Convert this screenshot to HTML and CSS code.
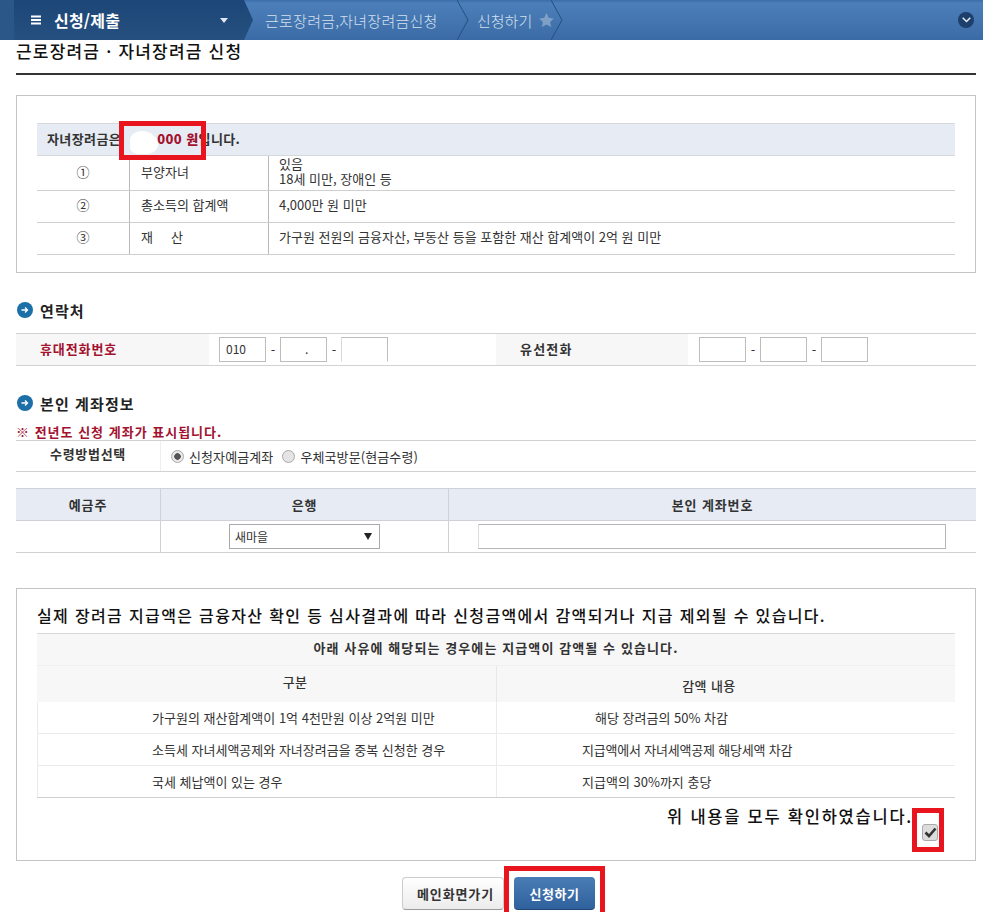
FILE: index.html
```html
<!DOCTYPE html>
<html lang="ko">
<head>
<meta charset="utf-8">
<title>근로장려금·자녀장려금 신청</title>
<link rel="stylesheet" href="styles.css">
</head>
<body>
<header class="topbar">
  <div class="menu">
    <svg class="burger" width="10" height="10" viewBox="0 0 10 10"><path d="M0 1.500h10M0 5h10M0 8.500h10" stroke="#fff" stroke-width="2"/></svg>
    <span class="menu-label">신청/제출</span>
    <svg class="caret" width="8" height="5" viewBox="0 0 8 5"><path d="M0 0h8L4 5z" fill="#dfe8f2"/></svg>
  </div>
  <div class="crumb crumb-first">근로장려금,자녀장려금신청<svg class="chev" width="12" height="40" viewBox="0 0 12 40"><path d="M0 0l11 20L0 40" fill="none" stroke="#24507f" stroke-width="1"/></svg></div>
  <div class="crumb">신청하기<svg class="star" width="15" height="14" viewBox="0 0 24 23"><path d="M12 0l3.700 7.800 8.300 1.100-6 5.900 1.500 8.200L12 19l-7.500 4L6 14.800 0 8.900l8.300-1.100z" fill="#7e9fc6"/></svg><svg class="chev" width="12" height="40" viewBox="0 0 12 40"><path d="M0 0l11 20L0 40" fill="none" stroke="#24507f" stroke-width="1"/></svg></div>
  <div class="spacer"></div>
  <div class="round-btn"><svg width="9" height="6" viewBox="0 0 9 6"><path d="M.7.7l3.800 3.800L8.300.7" fill="none" stroke="#e6eef7" stroke-width="1.500"/></svg></div>
</header>

<main class="page">
  <h1 class="page-title">근로장려금 · 자녀장려금 신청</h1>

  <section class="box box-top">
    <div class="info-head">
      <span>자녀장려금은</span><span class="blank-gap"></span><strong class="amount">000 원</strong><span>입니다.</span>
      <span class="mark mark-amount"><span class="smudge"></span></span>
    </div>
    <div class="info-row row-tall"><div class="c-num">①</div><div class="c-key">부양자녀</div><div class="c-val">있음<br>18세 미만, 장애인 등</div></div>
    <div class="info-row"><div class="c-num">②</div><div class="c-key">총소득의 합계액</div><div class="c-val">4,000만 원 미만</div></div>
    <div class="info-row"><div class="c-num">③</div><div class="c-key key-spread"><span>재</span><span>산</span></div><div class="c-val">가구원 전원의 금융자산, 부동산 등을 포함한 재산 합계액이 2억 원 미만</div></div>
  </section>

  <h2 class="sec-title sec-contact"><svg class="bullet" width="16" height="16" viewBox="0 0 16 16"><circle cx="8" cy="8" r="8" fill="#1d6fa8"/><path d="M4.500 8h6M8 5.500L10.500 8 8 10.500" fill="none" stroke="#fff" stroke-width="1.300"/></svg>연락처</h2>
  <div class="contact">
    <div class="ct-label ct-red">휴대전화번호</div>
    <div class="ct-field">
      <span class="tel">010</span><span class="dash">-</span><span class="tel tel-dot">.</span><span class="dash">-</span><span class="tel tel-cut"></span>
    </div>
    <div class="ct-label ct-dark">유선전화</div>
    <div class="ct-field ct-field-2">
      <span class="tel"></span><span class="dash">-</span><span class="tel"></span><span class="dash">-</span><span class="tel"></span>
    </div>
  </div>

  <h2 class="sec-title sec-account"><svg class="bullet" width="16" height="16" viewBox="0 0 16 16"><circle cx="8" cy="8" r="8" fill="#1d6fa8"/><path d="M4.500 8h6M8 5.500L10.500 8 8 10.500" fill="none" stroke="#fff" stroke-width="1.300"/></svg>본인 계좌정보</h2>
  <p class="note">※ 전년도 신청 계좌가 표시됩니다.</p>
  <div class="method">
    <div class="method-label">수령방법선택</div>
    <div class="method-opts">
      <span class="radio radio-on"></span><span class="radio-text">신청자예금계좌</span>
      <span class="radio"></span><span class="radio-text">우체국방문(현금수령)</span>
    </div>
  </div>

  <div class="acct">
    <div class="acct-h">예금주</div><div class="acct-h">은행</div><div class="acct-h">본인 계좌번호</div>
    <div class="acct-c"></div>
    <div class="acct-c"><div class="bank"><span>새마을</span><svg width="8" height="7" viewBox="0 0 8 7"><path d="M0 0h8L4 7z" fill="#222"/></svg></div></div>
    <div class="acct-c"><div class="acct-input"></div></div>
  </div>

  <section class="box box-bottom">
    <p class="warn">실제 장려금 지급액은 금융자산 확인 등 심사결과에 따라 신청금액에서 감액되거나 지급 제외될 수 있습니다.</p>
    <div class="cut">
      <div class="cut-top">아래 사유에 해당되는 경우에는 지급액이 감액될 수 있습니다.</div>
      <div class="cut-grid">
        <div class="cut-h cut-h1">구분</div><div class="cut-h cut-h2">감액 내용</div>
        <div class="cut-l">가구원의 재산합계액이 1억 4천만원 이상 2억원 미만</div><div class="cut-r cut-r-in">해당 장려금의 50% 차감</div>
        <div class="cut-l">소득세 자녀세액공제와 자녀장려금을 중복 신청한 경우</div><div class="cut-r cut-r-tight">지급액에서 자녀세액공제 해당세액 차감</div>
        <div class="cut-l">국세 체납액이 있는 경우</div><div class="cut-r">지급액의 30%까지 충당</div>
      </div>
    </div>
    <div class="confirm">
      <span class="confirm-text">위 내용을 모두 확인하였습니다.</span>
      <span class="check"><svg width="13" height="11" viewBox="0 0 13 11"><path d="M1.500 5.500L5 9l6.500-7.500" fill="none" stroke="#333" stroke-width="2.600"/></svg><span class="mark mark-check"></span></span>
    </div>
  </section>

  <div class="actions">
    <span class="btn btn-plain">메인화면가기</span>
    <span class="btn btn-blue">신청하기<span class="mark mark-submit"></span></span>
  </div>
</main>
</body>
</html>
```

FILE: styles.css
```css
* { box-sizing: border-box; }
html, body { margin: 0; padding: 0; background: #fff; }
body {
  width: 983px;
  height: 912px;
  overflow: hidden;
  font-family: "Noto Sans CJK KR", "Noto Sans", sans-serif;
  font-size: 13px;
  color: #333;
}

.topbar {
  display: flex;
  align-items: center;
  height: 40px;
  padding-left: 14px;
  color: #d3e0ef;
  background:
    linear-gradient(90deg, #2a5688 0 14px, transparent 14px),
    linear-gradient(#3b6dab 0, #4c7fb9 8%, #3b6ba6 100%);
}
.menu {
  display: flex;
  align-items: center;
  width: 240px;
  height: 40px;
  padding-left: 17px;
  color: #fff;
  background: linear-gradient(#1c4677, #25507f);
  clip-path: polygon(0 0, 230px 0, 239px 20px, 230px 40px, 0 40px);
}
.burger { flex: none; }
.menu-label { margin-left: 13px; font-size: 16px; font-weight: 700; letter-spacing: .2px; }
.caret { margin-left: 100px; flex: none; }
.crumb {
  display: flex;
  align-items: center;
  height: 40px;
  font-size: 15px;
  font-weight: 300;
  white-space: nowrap;
}
.crumb-first { margin-left: 11px; width: 212px; letter-spacing: .25px; }
.crumb-first .chev { margin-left: 19px; }
.star { margin-left: 7px; }
.crumb .star + .chev { margin-left: -3px; }
.spacer { flex: 1; }
.round-btn {
  display: flex;
  align-items: center;
  justify-content: center;
  width: 16px;
  height: 16px;
  margin-right: 9px;
  border-radius: 50%;
  background: #1d3f6b;
}

.page { padding: 0 7px 0 16px; }
.page-title {
  height: 35px;
  margin: 0;
  border-bottom: 2px solid #333;
  font-size: 17px;
  font-weight: 500;
  line-height: 22px;
  color: #111;
  letter-spacing: 1.200px;
}

.box { border: 1px solid #c4c4c4; }
.box-top { height: 178px; margin-top: 20px; padding: 27px 20px 0; }
.info-head {
  position: relative;
  display: flex;
  align-items: center;
  height: 33px;
  padding: 0 0 2px 10px;
  font-size: 13px;
  font-weight: 700;
  letter-spacing: .4px;
  background: #e6ebf4;
  border-top: 1px solid #d5d8dd;
  border-bottom: 1px solid #d5d8dd;
}
.blank-gap { width: 36px; }
.amount { color: #a3122f; }
.mark { position: absolute; border: 5px solid #e8151f; pointer-events: none; }
.mark-amount { left: 82px; top: -3px; width: 87px; height: 39px; }
.smudge { display: block; width: 28px; height: 23px; margin: 5px 0 0 6px; background: #fff; border-radius: 40% 60% 40% 30%; }

.info-row {
  display: grid;
  grid-template-columns: 92px 139px 1fr;
  height: 32px;
  border-bottom: 1px solid #cfcfcf;
  line-height: 28px;
}
.row-tall { height: 35px; }
.row-tall .c-key, .row-tall .c-num { line-height: 32px; }
.row-tall .c-val { line-height: 15px; }
.c-num { text-align: center; }
.c-key { padding-left: 11px; border-left: 1px solid #b9b9b9; }
.key-spread span + span { margin-left: 18px; }
.c-val { padding-left: 10px; border-left: 1px solid #b9b9b9; }

.sec-title {
  display: flex;
  align-items: center;
  height: 20px;
  margin: 27px 0 0;
  font-size: 15px;
  font-weight: 700;
  letter-spacing: 1.100px;
  color: #222;
}
.bullet { margin: 0 7px 0 1px; flex: none; }

.contact {
  display: grid;
  grid-template-columns: 193px 287px 192px 1fr;
  height: 33px;
  margin-top: 13px;
  border-top: 1px solid #d2d2d2;
  border-bottom: 1px solid #d2d2d2;
}
.ct-label {
  display: flex;
  align-items: center;
  padding: 0 0 3px 24px;
  font-weight: 700;
  letter-spacing: .9px;
  background: #f7f7f7;
}
.ct-red { color: #a3122f; }
.ct-dark { color: #333; letter-spacing: 1.200px; }
.ct-field { display: flex; align-items: center; padding-left: 10px; }
.ct-field-2 { padding-left: 11px; }
.tel {
  width: 47px;
  height: 25px;
  padding-left: 6px;
  border: 1px solid #bdbdbd;
  line-height: 22px;
  font-size: 12px;
}
.tel-dot { padding-left: 24px; }
.tel-cut { border-bottom-color: #fff; border-left-color: #d8d8d8; }
.dash { width: 14px; text-align: center; }

.note {
  margin: 11px 0 0;
  height: 16px;
  font-weight: 700;
  line-height: 16px;
  letter-spacing: 1px;
  color: #a3122f;
  white-space: nowrap;
}
.method {
  display: flex;
  height: 32px;
  border-top: 1px solid #d2d2d2;
  border-bottom: 1px solid #d2d2d2;
}
.method-label {
  width: 145px;
  padding-top: 3px;
  text-align: center;
  font-weight: 700;
  letter-spacing: .7px;
  border-right: 1px solid #efefef;
}
.method-opts { display: flex; align-items: center; padding-left: 10px; letter-spacing: .1px; }
.radio {
  width: 13px;
  height: 13px;
  border-radius: 50%;
  border: 1px solid #aaa;
  background: #e4e4e4;
}
.radio-on { background: radial-gradient(circle, #555 0 3px, #e8e8e8 3.500px); }
.radio-text { margin: 0 9px 0 5px; }

.acct {
  display: grid;
  grid-template-columns: 144px 288px 1fr;
  grid-template-rows: 32px 31px;
  margin-top: 16px;
  border-top: 1px solid #cfd3d8;
  border-bottom: 1px solid #d2d2d2;
}
.acct-h {
  display: flex;
  align-items: center;
  justify-content: center;
  font-weight: 700;
  letter-spacing: .9px;
  background: #e6ebf4;
  border-bottom: 1px solid #cfd3d8;
  border-left: 1px solid #cfd3d8;
}
.acct-h:first-child { border-left: 0; }
.acct-c {
  display: flex;
  align-items: center;
  justify-content: center;
  border-left: 1px solid #cfd3d8;
}
.acct-c:nth-child(4) { border-left: 0; }
.bank {
  display: flex;
  justify-content: space-between;
  align-items: center;
  width: 151px;
  height: 25px;
  padding: 0 7px 0 5px;
  border: 1px solid #aaa;
  font-size: 12px;
}
.acct-input { width: 468px; height: 25px; margin-right: 2px; border: 1px solid #b5b5b5; border-left-color: #ddd; }

.box-bottom { height: 273px; margin-top: 35px; padding: 0 20px; }
.warn {
  margin: 0;
  height: 44px;
  font-size: 16px;
  font-weight: 500;
  line-height: 52px;
  letter-spacing: 1.350px;
  color: #111;
  white-space: nowrap;
}
.cut { border-top: 1px solid #d8d8d8; border-bottom: 1px solid #cfcfcf; }
.cut-top {
  height: 32px;
  text-align: center;
  font-weight: 700;
  line-height: 27px;
  letter-spacing: 1.100px;
  background: #f7f7f7;
  border-bottom: 1px solid #efefef;
}
.cut-grid {
  display: grid;
  grid-template-columns: 459px 1fr;
  grid-template-rows: 36px 32px 32px 31px;
}
.cut-h {
  display: flex;
  align-items: center;
  justify-content: center;
  font-weight: 500;
  letter-spacing: .4px;
  background: #f7f7f7;
}
.cut-h1 { padding: 0 0 6px 57px; }
.cut-h2 { border-left: 1px solid #e8e8e8; padding: 2px 34px 0 0; }
.cut-l, .cut-r {
  display: flex;
  align-items: center;
  border-bottom: 1px solid #ebebeb;
  border-left: 1px solid #ebebeb;
}
.cut-l { padding-left: 114px; }
.cut-r { padding-left: 85px; }
.cut-r-in { padding-left: 98px; }
.cut-r-tight { letter-spacing: -.2px; }
.cut-grid > :nth-last-child(-n+2) { border-bottom: 0; }

.confirm {
  display: flex;
  justify-content: flex-end;
  align-items: flex-start;
  padding-top: 7px;
  padding-right: 17px;
  color: #111;
}
.confirm-text { font-size: 16.500px; font-weight: 500; line-height: 22px; letter-spacing: 1.750px; white-space: nowrap; }
.check {
  position: relative;
  display: flex;
  align-items: center;
  justify-content: center;
  width: 16px;
  height: 17px;
  margin: 19px 0 0 9px;
  border: 1px solid #aaa;
  border-radius: 3px;
  background: #dcdcdc;
}
.mark-check { left: -11px; top: -17px; width: 32px; height: 44px; }

.actions {
  display: flex;
  justify-content: center;
  gap: 10px;
  margin-top: 16px;
  padding-left: 5px;
}
.btn {
  position: relative;
  display: flex;
  align-items: center;
  justify-content: center;
  width: 81px;
  height: 33px;
  border-radius: 4px;
  font-weight: 700;
  letter-spacing: .6px;
}
.btn-plain {
  width: 102px;
  padding-left: 5px;
  border: 1px solid #ccc;
  border-bottom-color: #999;
  background: linear-gradient(#fff, #ececec);
  color: #333;
  letter-spacing: .9px;
}
.btn-blue {
  background: linear-gradient(#4a7cb5, #2f619d);
  border-bottom: 1px solid #1f4675;
  color: #fff;
}
.mark-submit { left: -10px; top: -11px; width: 101px; height: 46px; border-bottom: 0; }
```
